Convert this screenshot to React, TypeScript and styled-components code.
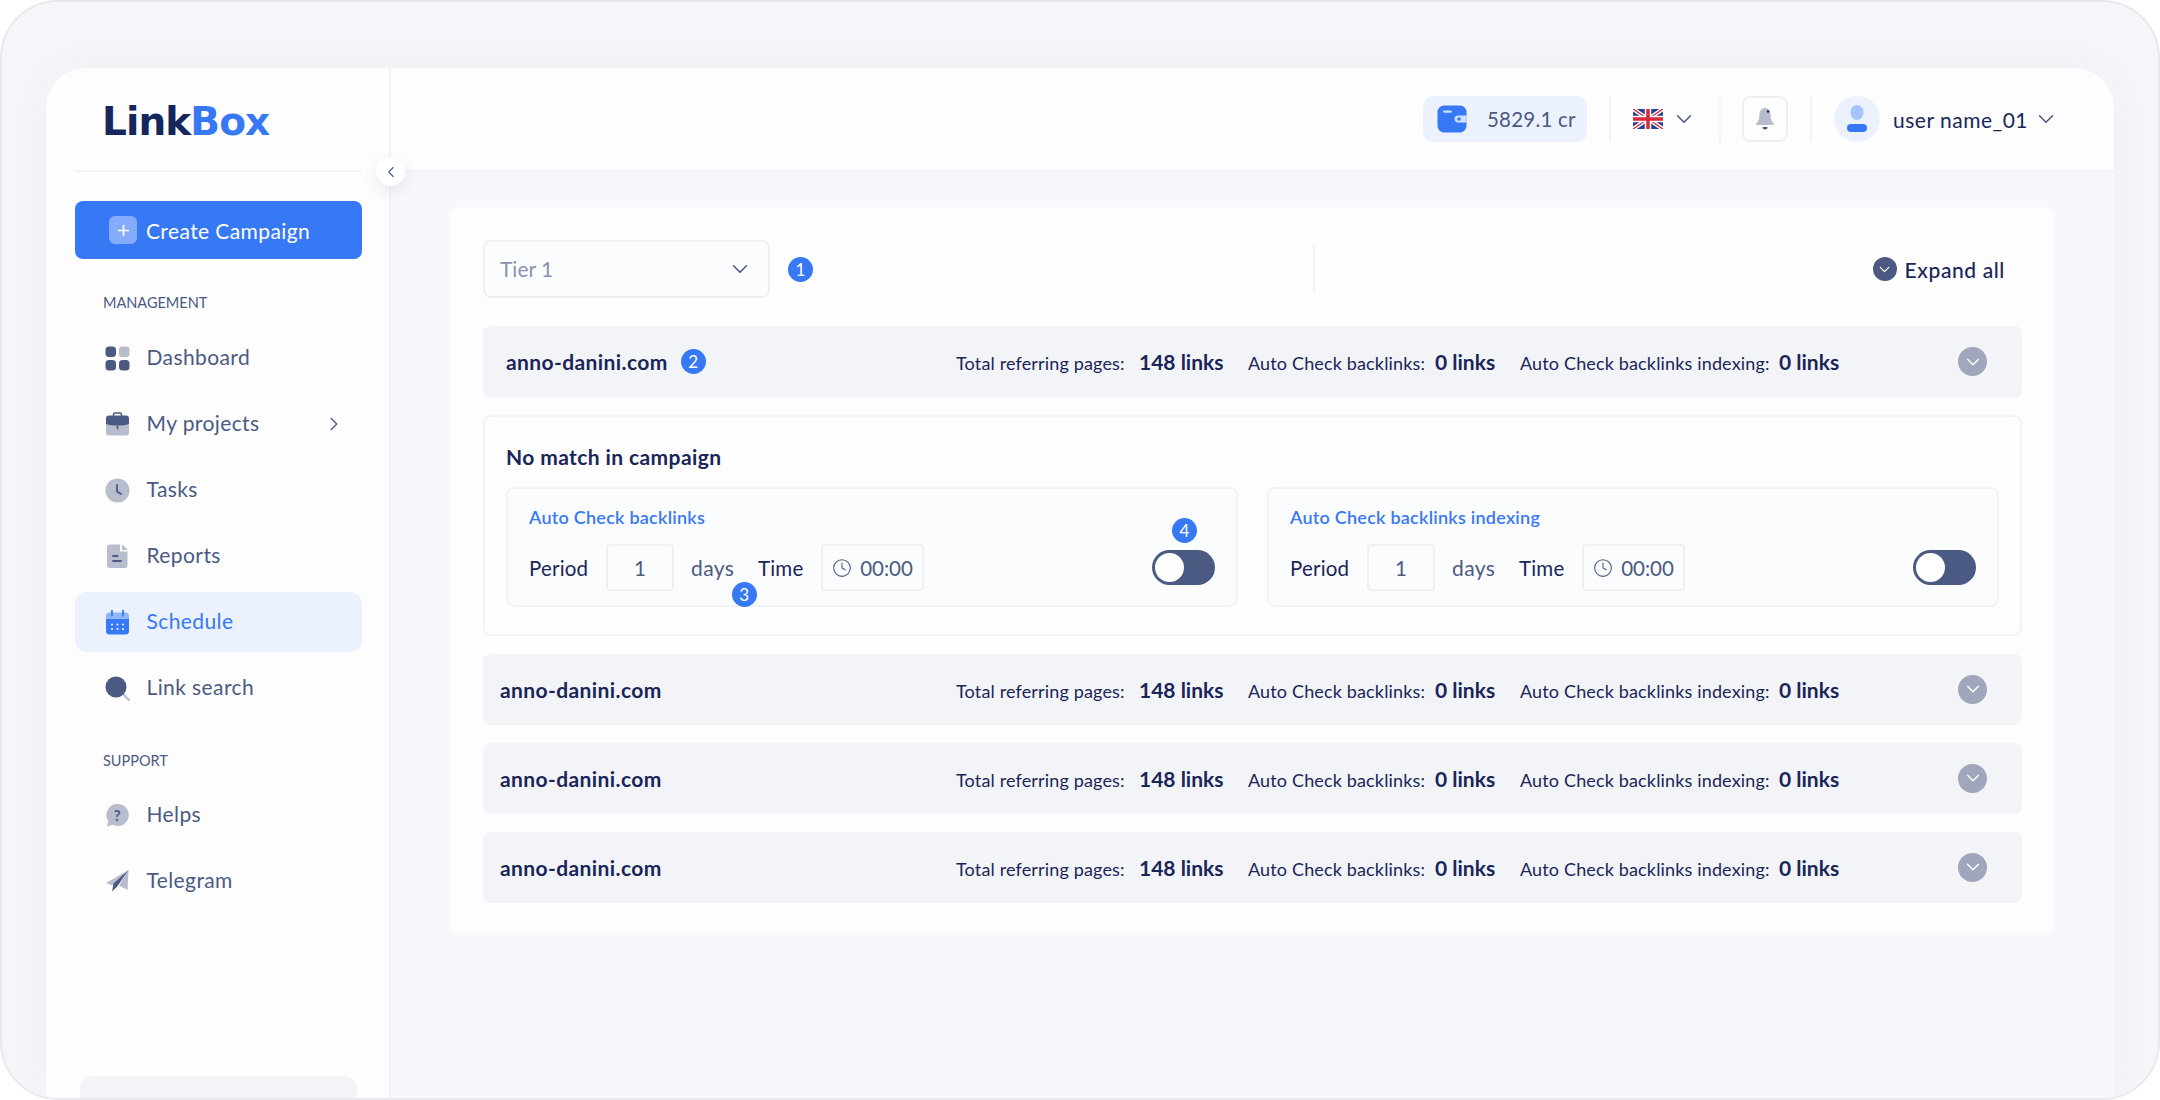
import React from "react"
import styled, { createGlobalStyle } from "styled-components"
import { ChevronDown, ChevronLeft, ChevronRight, Clock4, Plus } from "lucide-react"

const BLUE = "#3778f5"
const NAVY = "#1a2659"
const SLATE = "#4b5a82"
const MUTED = "#b7bdcd"
const LINE = "#f2f3f6"

const Global = createGlobalStyle`
  html, body {
    margin: 0;
    width: 2160px;
    height: 1100px;
    overflow: hidden;
    background: #fff;
    font-family: "Lato", "Noto Sans", sans-serif;
    color: ${NAVY};
  }
  * { box-sizing: border-box; }
`

const Frame = styled.div`
  width: 2160px;
  height: 1100px;
  padding: 66px 44px 0;
  background: #f5f6f9;
  border: 2px solid #e8eaef;
  border-radius: 58px;
  overflow: hidden;
`

const Window = styled.div`
  display: flex;
  height: 100%;
  border-radius: 40px 40px 0 0;
  background: #f7f8fb;
  box-shadow: 0 0 40px rgba(60, 70, 110, 0.04);
`

const Sidebar = styled.aside`
  position: relative;
  flex: 0 0 345px;
  display: flex;
  flex-direction: column;
  padding: 0 27px 0 29px;
  background: #fdfdfe;
  border-right: 2px solid ${LINE};
  border-top-left-radius: 40px;
`

const LogoBar = styled.div`
  height: 104px;
  display: flex;
  align-items: center;
  padding: 4px 0 0 27px;
  border-bottom: 2px solid ${LINE};
`

const Logo = styled.span`
  font-family: "DejaVu Sans", sans-serif;
  font-weight: 700;
  font-size: 39px;
  line-height: 1;
  letter-spacing: -0.9px;
  color: #14265c;
  span { color: ${BLUE}; }
`

const CollapseButton = styled.button`
  position: absolute;
  top: 89px;
  right: -16px;
  width: 29px;
  height: 29px;
  padding: 0;
  display: flex;
  align-items: center;
  justify-content: center;
  background: #fff;
  border: 0;
  border-radius: 50%;
  color: ${SLATE};
  box-shadow: 0 6px 16px rgba(60, 70, 110, 0.1);
`

const CreateButton = styled.button`
  margin-top: 29px;
  height: 58px;
  flex: none;
  display: flex;
  align-items: center;
  gap: 9px;
  padding: 0 0 0 34px;
  background: ${BLUE};
  border: 0;
  border-radius: 8px;
  color: #fff;
  font: 400 21px "Lato", sans-serif;
  letter-spacing: 0.4px;
`

const PlusBox = styled.span`
  width: 28px;
  height: 28px;
  display: flex;
  align-items: center;
  justify-content: center;
  background: rgba(255, 255, 255, 0.38);
  border-radius: 6px;
`

const SectionLabel = styled.div<{ $top: number; $bottom: number }>`
  margin: ${(p) => p.$top}px 0 ${(p) => p.$bottom}px 28px;
  height: 16px;
  font-size: 14.5px;
  line-height: 16px;
  color: ${SLATE};
`

const Nav = styled.nav`
  display: flex;
  flex-direction: column;
  gap: 6px;
`

const NavItem = styled.a<{ $active?: boolean }>`
  height: 60px;
  display: flex;
  align-items: center;
  gap: 16.5px;
  padding: 0 17px 0 30px;
  border-radius: 12px;
  font-size: 21px;
  line-height: 24px;
  letter-spacing: 0.4px;
  color: ${(p) => (p.$active ? BLUE : SLATE)};
  background: ${(p) => (p.$active ? "#ebf1fd" : "transparent")};
  svg:last-child:not(:first-child) { margin-left: auto; }
`

const NavText = styled.span`
  margin-top: -2px;
`

const BottomCard = styled.div`
  margin: auto 5px 0 5px;
  height: 22px;
  flex: none;
  background: #f3f4f7;
  border-radius: 12px 12px 0 0;
`

const Main = styled.main`
  flex: 1;
  display: flex;
  flex-direction: column;
  min-width: 0;
`

const TopBar = styled.header`
  height: 104px;
  flex: none;
  display: flex;
  align-items: center;
  justify-content: flex-end;
  padding: 0 55px 0 0;
  background: #fdfdfe;
  border-bottom: 2px solid ${LINE};
  border-top-right-radius: 40px;
`

const Wallet = styled.div`
  width: 164px;
  height: 46px;
  display: flex;
  align-items: center;
  gap: 20px;
  padding-left: 14px;
  background: #ebf1fd;
  border-radius: 10px;
  font-size: 20.5px;
  letter-spacing: 0.2px;
  color: ${SLATE};
`

const BarDivider = styled.div<{ $space: number }>`
  width: 2px;
  height: 46px;
  margin: 0 ${(p) => p.$space}px 0 22px;
  background: ${LINE};
`

const LangPicker = styled.div`
  display: flex;
  align-items: center;
  gap: 8px;
  color: ${SLATE};
`

const BellBox = styled.div`
  width: 46px;
  height: 46px;
  display: flex;
  align-items: center;
  justify-content: center;
  border: 2px solid #eff0f4;
  border-radius: 8px;
`

const Avatar = styled.div`
  width: 46px;
  height: 46px;
  display: flex;
  align-items: center;
  justify-content: center;
  background: #ebf1fd;
  border-radius: 50%;
`

const UserName = styled.span`
  margin: 0 5px 0 13px;
  font-size: 21px;
  letter-spacing: 0.5px;
  color: ${NAVY};
`

const Content = styled.div`
  flex: 1;
  padding: 35px 59px 0 58px;
`

const Card = styled.section`
  padding: 31px 31px 30px 32px;
  background: #fdfdfe;
  border: 2px solid #fbfbfd;
  border-radius: 8px;
`

const Controls = styled.div`
  height: 58px;
  display: flex;
  align-items: center;
`

const TierGroup = styled.div`
  flex: 0 0 830px;
  display: flex;
  align-items: center;
  gap: 18px;
`

const TierSelect = styled.div`
  width: 287px;
  height: 58px;
  display: flex;
  align-items: center;
  justify-content: space-between;
  padding: 0 15px 2px 15px;
  background: #fbfcfe;
  border: 2px solid #eef0f4;
  border-radius: 8px;
  font-size: 21px;
  color: #8a92ae;
  svg { color: ${SLATE}; margin-top: 2px; }
`

const ControlsDivider = styled.div`
  width: 2px;
  height: 46px;
  background: ${LINE};
`

const ExpandAll = styled.button`
  margin: 0 17px 0 auto;
  display: flex;
  align-items: center;
  gap: 8px;
  padding: 0;
  background: none;
  border: 0;
  font: 500 21px "Lato", sans-serif;
  letter-spacing: 0.6px;
  color: ${NAVY};
`

const ExpandIcon = styled.span`
  width: 24px;
  height: 24px;
  display: flex;
  align-items: center;
  justify-content: center;
  background: ${SLATE};
  border-radius: 50%;
  color: #fff;
`

const List = styled.div`
  margin-top: 28px;
  display: flex;
  flex-direction: column;
  gap: 17.5px;
`

const Row = styled.div<{ $inset: number }>`
  height: 71.5px;
  display: flex;
  align-items: center;
  padding: 0 35px 0 ${(p) => p.$inset}px;
  background: #f3f4f7;
  border-radius: 8px;
`

const Domain = styled.span`
  font-size: 21px;
  letter-spacing: 0.4px;
  font-weight: 700;
  color: ${NAVY};
`

const Stats = styled.div`
  margin: 0 118px 0 auto;
  display: flex;
  align-items: baseline;
`

const Stat = styled.div<{ $width: number; $label: number }>`
  width: ${(p) => p.$width}px;
  display: grid;
  grid-template-columns: ${(p) => p.$label}px auto;
  align-items: baseline;
  justify-content: start;
  font-size: 18px;
  letter-spacing: 0.15px;
  white-space: nowrap;
  color: ${NAVY};
  b {
    font-size: 21px;
    font-weight: 700;
    letter-spacing: 0;
  }
`

const RowToggle = styled.span`
  width: 29px;
  height: 29px;
  flex: none;
  display: flex;
  align-items: center;
  justify-content: center;
  background: #a0a6bb;
  border-radius: 50%;
  color: #fff;
`

const Badge = styled.span<{ $gap?: number }>`
  width: 25px;
  height: 25px;
  flex: none;
  display: inline-flex;
  align-items: center;
  justify-content: center;
  margin-left: ${(p) => p.$gap ?? 0}px;
  background: ${BLUE};
  border-radius: 50%;
  font-size: 17px;
  font-weight: 400;
  color: #fff;
`

const FloatingBadge = styled(Badge)<{ $left: number; $top: number }>`
  position: absolute;
  left: ${(p) => p.$left}px;
  top: ${(p) => p.$top}px;
`

const Panel = styled.div`
  height: 221px;
  padding: 28px 21px;
  background: #fdfdfe;
  border: 2px solid ${LINE};
  border-radius: 8px;
`

const PanelTitle = styled.h3`
  margin: 0 0 18px;
  font-size: 21px;
  letter-spacing: 0.4px;
  line-height: 24px;
  font-weight: 700;
  color: ${NAVY};
`

const Schedules = styled.div`
  display: flex;
  gap: 29px;
`

const ScheduleCard = styled.div`
  flex: 1;
  height: 120px;
  padding: 17px 21px 0;
  background: #fbfcfe;
  border: 2px solid ${LINE};
  border-radius: 8px;
`

const ScheduleTitle = styled.div`
  height: 22px;
  margin-bottom: 16px;
  font-size: 18px;
  letter-spacing: 0.25px;
  line-height: 22px;
  font-weight: 600;
  color: ${BLUE};
`

const ScheduleRow = styled.div`
  display: grid;
  grid-template-columns: 77px 68px 84px 63px 103px 1fr 63px;
  align-items: center;
  height: 47px;
`

const FieldLabel = styled.span`
  font-size: 20.5px;
  letter-spacing: 0.2px;
  color: ${NAVY};
`

const Days = styled.span`
  position: relative;
  align-self: stretch;
  display: flex;
  align-items: center;
  padding-left: 17px;
  font-size: 21px;
  letter-spacing: 0.4px;
  color: ${SLATE};
`

const Field = styled.div`
  height: 47px;
  display: flex;
  align-items: center;
  justify-content: center;
  gap: 8px;
  background: #fbfcfe;
  border: 2px solid #eef0f4;
  border-radius: 4px;
  font-size: 20.5px;
  color: ${SLATE};
`

const Switch = styled.div`
  grid-column: 7;
  position: relative;
  width: 63px;
  height: 35px;
  padding: 3px;
  background: ${SLATE};
  border-radius: 18px;
`

const Knob = styled.span`
  display: block;
  width: 29px;
  height: 29px;
  background: #fff;
  border-radius: 50%;
`

const DashboardIcon = () => (
  <svg width="25" height="25" viewBox="0 0 25 25">
    <rect x="0.5" y="0.5" width="10.5" height="10.5" rx="3.5" fill={SLATE} />
    <rect x="14" y="0.5" width="10.5" height="10.5" rx="3" fill={MUTED} />
    <rect x="0.5" y="14" width="10.5" height="10.5" rx="3.5" fill={SLATE} />
    <rect x="14" y="14" width="10.5" height="10.5" rx="3.5" fill={SLATE} />
  </svg>
)

const ProjectsIcon = () => (
  <svg width="25" height="25" viewBox="0 0 25 25">
    <path d="M8.5 4V2.6C8.5 1.7 9.2 1 10 1h5c.8 0 1.5.7 1.5 1.6V4" fill="none" stroke={SLATE} strokeWidth="1.5" />
    <path d="M1 10h23v10.500a3 3 0 0 1-3 3H4a3 3 0 0 1-3-3z" fill={MUTED} />
    <path d="M4 3.500h17a3 3 0 0 1 3 3V12c-5 2-18 2-23 0V6.500a3 3 0 0 1 3-3z" fill={SLATE} />
    <rect x="11.700" y="13.500" width="1.600" height="4" rx="0.8" fill={SLATE} />
  </svg>
)

const TasksIcon = () => (
  <svg width="25" height="25" viewBox="0 0 25 25">
    <circle cx="12.500" cy="12.500" r="12" fill={MUTED} />
    <path d="M12 7v6.500l4 2.500" fill="none" stroke={SLATE} strokeWidth="1.800" strokeLinecap="round" />
  </svg>
)

const ReportsIcon = () => (
  <svg width="25" height="25" viewBox="0 0 25 25">
    <path d="M5 .5h10v7h7.500V21a3 3 0 0 1-3 3H5a3 3 0 0 1-3-3V3.500a3 3 0 0 1 3-3z" fill={MUTED} />
    <path d="M17 .5l6 5.500h-6z" fill={MUTED} />
    <path d="M8 12h4.500M8 17h8" stroke={SLATE} strokeWidth="1.800" strokeLinecap="round" />
  </svg>
)

const ScheduleIcon = () => (
  <svg width="25" height="25" viewBox="0 0 25 25">
    <path d="M4.500 2.500h16a3.500 3.500 0 0 1 3.500 3.500v4H1V6a3.500 3.500 0 0 1 3.500-3.500z" fill="#8fb5fa" />
    <path d="M1 9h23v12a3.500 3.500 0 0 1-3.500 3.500h-16A3.500 3.500 0 0 1 1 21z" fill={BLUE} />
    <path d="M7 .5v5M18 .5v5" stroke={BLUE} strokeWidth="1.800" strokeLinecap="round" />
    <g fill="#fff">
      <circle cx="7" cy="14.500" r="1" />
      <circle cx="12.500" cy="14.500" r="1" />
      <circle cx="18" cy="14.500" r="1" />
      <circle cx="7" cy="19" r="1" />
      <circle cx="12.500" cy="19" r="1" />
      <circle cx="18" cy="19" r="1" />
    </g>
  </svg>
)

const SearchIcon = () => (
  <svg width="25" height="25" viewBox="0 0 25 25">
    <path d="M18 18l6 6" stroke={MUTED} strokeWidth="2.200" strokeLinecap="round" />
    <circle cx="11" cy="11" r="10.500" fill={SLATE} />
  </svg>
)

const HelpIcon = () => (
  <svg width="25" height="25" viewBox="0 0 25 25">
    <path d="M12.800 1a11 11 0 1 1-5 20.800L2 23.500l1.300-5.300A11 11 0 0 1 12.800 1z" fill={MUTED} />
    <text x="12.500" y="18" textAnchor="middle" fontSize="15" fontFamily="Lato, sans-serif" fontWeight="700" fill={SLATE}>?</text>
  </svg>
)

const TelegramIcon = () => (
  <svg width="25" height="25" viewBox="0 0 25 25">
    <path d="M23.500 1L1 14l6 2.500z" fill={MUTED} />
    <path d="M23.500 1l-1 20-8.500-4.500z" fill={MUTED} />
    <path d="M23.500 1L8.500 14.500 7 22.500l5-4.800z" fill={SLATE} />
  </svg>
)

const WalletIcon = () => (
  <svg width="30" height="28" viewBox="0 0 30 28">
    <rect x="0.500" y="0.500" width="29" height="27" rx="6.500" fill={BLUE} />
    <rect x="6" y="5.500" width="9" height="2.200" rx="1.100" fill="#cfe0ff" />
    <path d="M21 10.500h8.500v7H21a3.500 3.500 0 0 1 0-7z" fill="#cfe0ff" />
    <circle cx="22" cy="14" r="1.800" fill={BLUE} />
  </svg>
)

const UkFlag = () => (
  <svg width="30" height="20" viewBox="0 0 60 40">
    <rect width="60" height="40" rx="3" fill="#2a3f8f" />
    <path d="M0 0l60 40M60 0L0 40" stroke="#fff" strokeWidth="8" />
    <path d="M0 0l60 40M60 0L0 40" stroke="#d8283c" strokeWidth="2.600" />
    <path d="M30 0v40M0 20h60" stroke="#fff" strokeWidth="13" />
    <path d="M30 0v40M0 20h60" stroke="#d8283c" strokeWidth="7" />
  </svg>
)

const BellIcon = () => (
  <svg width="20" height="24" viewBox="0 0 20 24">
    <path d="M10 1c3.500 0 5.500 3 5.500 6.500 0 4 1 6.500 3.500 9.500v1H1v-1c2.500-3 3.500-5.500 3.500-9.500C4.500 4 6.500 1 10 1z" fill={MUTED} />
    <path d="M7.500 20h5a2.500 2.500 0 0 1-5 0z" fill={SLATE} />
    <circle cx="13" cy="4.500" r="1.300" fill={NAVY} />
  </svg>
)

const UserIcon = () => (
  <svg width="22" height="30" viewBox="0 0 22 30">
    <ellipse cx="11" cy="8.500" rx="6.500" ry="7.500" fill="#a5c4fb" />
    <rect x="1" y="20" width="20" height="8" rx="4" fill={BLUE} />
  </svg>
)

const menu = [
  { label: "Dashboard", icon: <DashboardIcon /> },
  { label: "My projects", icon: <ProjectsIcon />, more: true },
  { label: "Tasks", icon: <TasksIcon /> },
  { label: "Reports", icon: <ReportsIcon /> },
  { label: "Schedule", icon: <ScheduleIcon />, active: true },
  { label: "Link search", icon: <SearchIcon /> },
]

const support = [
  { label: "Helps", icon: <HelpIcon /> },
  { label: "Telegram", icon: <TelegramIcon /> },
]

function RowStats() {
  return (
    <Stats>
      <Stat $width={292} $label={183}>Total referring pages: <b>148 links</b></Stat>
      <Stat $width={272} $label={187}>Auto Check backlinks: <b>0 links</b></Stat>
      <Stat $width={320} $label={259}>Auto Check backlinks indexing: <b>0 links</b></Stat>
    </Stats>
  )
}

function DomainRow({ inset, badge }: { inset: number; badge?: boolean }) {
  return (
    <Row $inset={inset}>
      <Domain>anno-danini.com</Domain>
      {badge && <Badge $gap={13}>2</Badge>}
      <RowStats />
      <RowToggle><ChevronDown size={22} strokeWidth={1.5} /></RowToggle>
    </Row>
  )
}

function AutoCheck({ title, marks }: { title: string; marks?: boolean }) {
  return (
    <ScheduleCard>
      <ScheduleTitle>{title}</ScheduleTitle>
      <ScheduleRow>
        <FieldLabel>Period</FieldLabel>
        <Field>1</Field>
        <Days>
          days
          {marks && <FloatingBadge $left={58} $top={38}>3</FloatingBadge>}
        </Days>
        <FieldLabel>Time</FieldLabel>
        <Field><Clock4 size={20} strokeWidth={1.3} />00:00</Field>
        <Switch>
          <Knob />
          {marks && <FloatingBadge $left={20} $top={-32}>4</FloatingBadge>}
        </Switch>
      </ScheduleRow>
    </ScheduleCard>
  )
}

export default function App() {
  return (
    <Frame>
      <Global />
      <Window>
        <Sidebar>
          <LogoBar>
            <Logo>Link<span>Box</span></Logo>
          </LogoBar>
          <CollapseButton><ChevronLeft size={18} strokeWidth={1.5} /></CollapseButton>
          <CreateButton>
            <PlusBox><Plus size={17} strokeWidth={2.4} /></PlusBox>
            Create Campaign
          </CreateButton>
          <SectionLabel $top={36} $bottom={17}>MANAGEMENT</SectionLabel>
          <Nav>
            {menu.map((item) => (
              <NavItem key={item.label} $active={item.active}>
                {item.icon}
                <NavText>{item.label}</NavText>
                {item.more && <ChevronRight size={22} strokeWidth={1.5} />}
              </NavItem>
            ))}
          </Nav>
          <SectionLabel $top={35} $bottom={16}>SUPPORT</SectionLabel>
          <Nav>
            {support.map((item) => (
              <NavItem key={item.label}>
                {item.icon}
                <NavText>{item.label}</NavText>
              </NavItem>
            ))}
          </Nav>
          <BottomCard />
        </Sidebar>
        <Main>
          <TopBar>
            <Wallet><WalletIcon />5829.1 cr</Wallet>
            <BarDivider $space={22} />
            <LangPicker>
              <UkFlag />
              <ChevronDown size={26} strokeWidth={1.4} />
            </LangPicker>
            <BarDivider $space={21} />
            <BellBox><BellIcon /></BellBox>
            <BarDivider $space={22} />
            <Avatar><UserIcon /></Avatar>
            <UserName>user name_01</UserName>
            <ChevronDown size={26} strokeWidth={1.4} color={SLATE} />
          </TopBar>
          <Content>
            <Card>
              <Controls>
                <TierGroup>
                  <TierSelect>
                    Tier 1
                    <ChevronDown size={26} strokeWidth={1.5} />
                  </TierSelect>
                  <Badge>1</Badge>
                </TierGroup>
                <ControlsDivider />
                <ExpandAll>
                  <ExpandIcon><ChevronDown size={17} strokeWidth={1.8} /></ExpandIcon>
                  Expand all
                </ExpandAll>
              </Controls>
              <List>
                <DomainRow inset={23} badge />
                <Panel>
                  <PanelTitle>No match in campaign</PanelTitle>
                  <Schedules>
                    <AutoCheck title="Auto Check backlinks" marks />
                    <AutoCheck title="Auto Check backlinks indexing" />
                  </Schedules>
                </Panel>
                <DomainRow inset={17} />
                <DomainRow inset={17} />
                <DomainRow inset={17} />
              </List>
            </Card>
          </Content>
        </Main>
      </Window>
    </Frame>
  )
}
